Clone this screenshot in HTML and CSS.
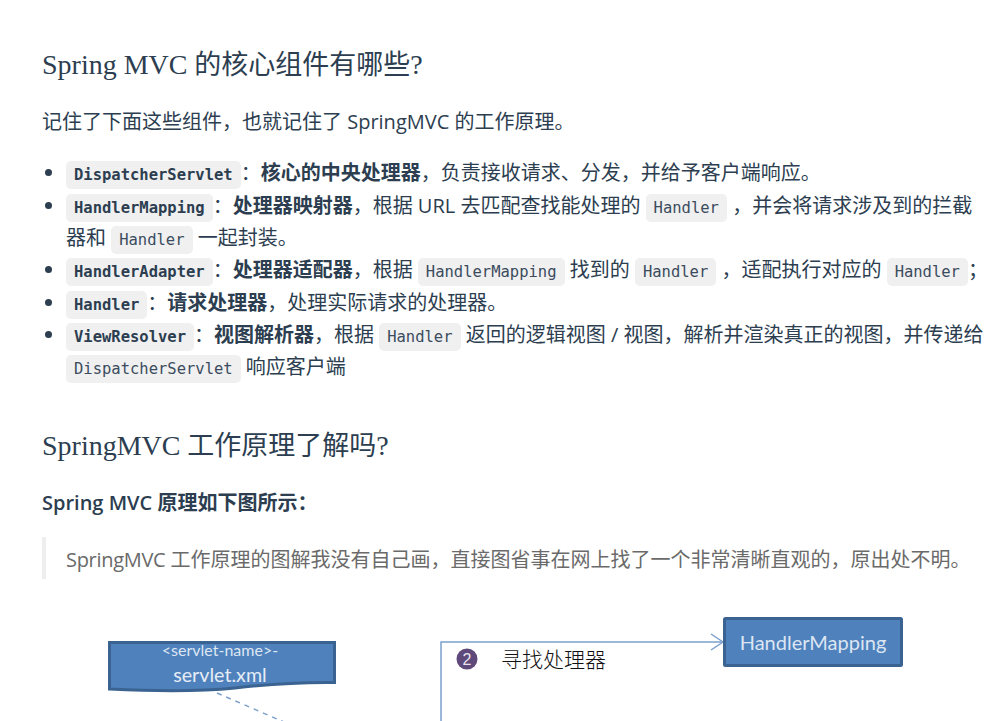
FILE: index.html
```html
<!DOCTYPE html>
<html lang="zh-CN">
<head>
<meta charset="utf-8">
<title>Spring MVC</title>
<link rel="stylesheet" href="styles.css">
</head>
<body>
<main class="page">
  <h2 class="title first"><span class="latin">Spring MVC</span> 的核心组件有哪些<span class="latin">?</span></h2>
  <p class="para">记住了下面这些组件，也就记住了 SpringMVC 的工作原理。</p>
  <ul class="list">
    <li><strong><code>DispatcherServlet</code></strong>：<strong>核心的中央处理器</strong>，负责接收请求、分发，并给予客户端响应。</li>
    <li><strong><code>HandlerMapping</code></strong>：<strong>处理器映射器</strong>，根据 URL 去匹配查找能处理的 <code>Handler</code> ，并会将请求涉及到的拦截器和 <code>Handler</code> 一起封装。</li>
    <li><strong><code>HandlerAdapter</code></strong>：<strong>处理器适配器</strong>，根据 <code>HandlerMapping</code> 找到的 <code>Handler</code> ，适配执行对应的 <code>Handler</code>；</li>
    <li><strong><code>Handler</code></strong>：<strong>请求处理器</strong>，处理实际请求的处理器。</li>
    <li><strong><code>ViewResolver</code></strong>：<strong>视图解析器</strong>，根据 <code>Handler</code> 返回的逻辑视图 / 视图，解析并渲染真正的视图，并传递给 <code>DispatcherServlet</code> 响应客户端</li>
  </ul>
  <h2 class="title second"><span class="latin">SpringMVC</span> 工作原理了解吗<span class="latin">?</span></h2>
  <p class="para lead"><strong>Spring MVC 原理如下图所示：</strong></p>
  <blockquote class="quote"><span class="tight">SpringMVC</span> 工作原理的图解我没有自己画，直接图省事在网上找了一个非常清晰直观的，原出处不明。</blockquote>
  <svg class="diagram" width="948" height="121" viewBox="42 600 948 121" aria-label="SpringMVC 工作原理图">
    <path class="flow" d="M441 721V642H722"/>
    <path class="flow" d="M711 634L723 642L711 650"/>
    <rect class="box" x="724.5" y="618.5" width="177" height="47" rx="1"/>
    <text class="box-label" x="813" y="650" text-anchor="middle">HandlerMapping</text>
    <circle class="step" cx="467" cy="659" r="10.5"/>
    <text class="step-num" x="467" y="665" text-anchor="middle">2</text>
    <text class="step-label" x="501" y="667">寻找处理器</text>
    <path class="box" d="M109.500 642.500H334.500V682.500C295 682 265 684.500 235 688C195 692 150 691 109.500 689Z"/>
    <text class="file-tag" x="220" y="656" text-anchor="middle">&lt;servlet-name&gt;-</text>
    <text class="file-name" x="220" y="682" text-anchor="middle">servlet.xml</text>
    <path class="link" d="M217 693L284 722"/>
  </svg>
</main>
</body>
</html>
```
FILE: styles.css
```css
html, body {
  margin: 0;
  padding: 0;
  background: #fff;
}
body {
  height: 721px;
  overflow: hidden;
  color: #2c3e50;
  font-family: "Open Sans", "Noto Sans CJK SC", sans-serif;
  font-size: 20px;
  line-height: 32.33px;
}
.page {
  padding: 0 0 0 42px;
  width: 948px;
}
.title {
  margin: 0;
  font-family: "Liberation Serif", "Noto Sans CJK SC", serif;
  font-size: 27px;
  font-weight: 400;
  line-height: 40px;
  color: #2c3e50;
}
.latin { font-size: 28px; line-height: 1; }
.first { padding-top: 45px; }
.second { margin-top: 42px; }
.para { margin: 21px 0 0; }
.lead { margin-top: 21px; }
strong { font-weight: 600; }
.list {
  margin: 19px 0 0;
  padding: 0 0 0 24px;
}
.list li { padding: 0; }
code {
  font-family: "DejaVu Sans Mono", monospace;
  font-size: 15.5px;
  line-height: 1;
  color: #3b4c5e;
  background: #f0f0f0;
  padding: 5px 8px;
  border-radius: 5px;
}
strong code { color: #2c3e50; }
.quote {
  margin: 18px 0 0;
  padding: 7px 0 3px 20px;
  border-left: 4px solid #eee;
  color: #6a6a6a;
  white-space: nowrap;
}
.tight { letter-spacing: -0.3px; }
.diagram {
  display: block;
  margin-top: 20.7px;
}
.flow { fill: none; stroke: #7ba0cd; stroke-width: 1.500; }
.link { fill: none; stroke: #7ba0cd; stroke-width: 1.500; stroke-dasharray: 5 5; }
.box { fill: #4f81bd; stroke: #3a6391; stroke-width: 3; }
.box-label { fill: #dce6f2; font: 20px Lato, sans-serif; }
.file-tag { fill: #dce6f2; font: 16px Lato, sans-serif; }
.file-name { fill: #e6edf5; font: 19.700px Lato, sans-serif; }
.step { fill: #5f497a; }
.step-num { fill: #e8e2f0; font: 16px "Liberation Sans", sans-serif; }
.step-label { fill: #111; font: 300 21px "Noto Sans CJK SC", sans-serif; }
```
